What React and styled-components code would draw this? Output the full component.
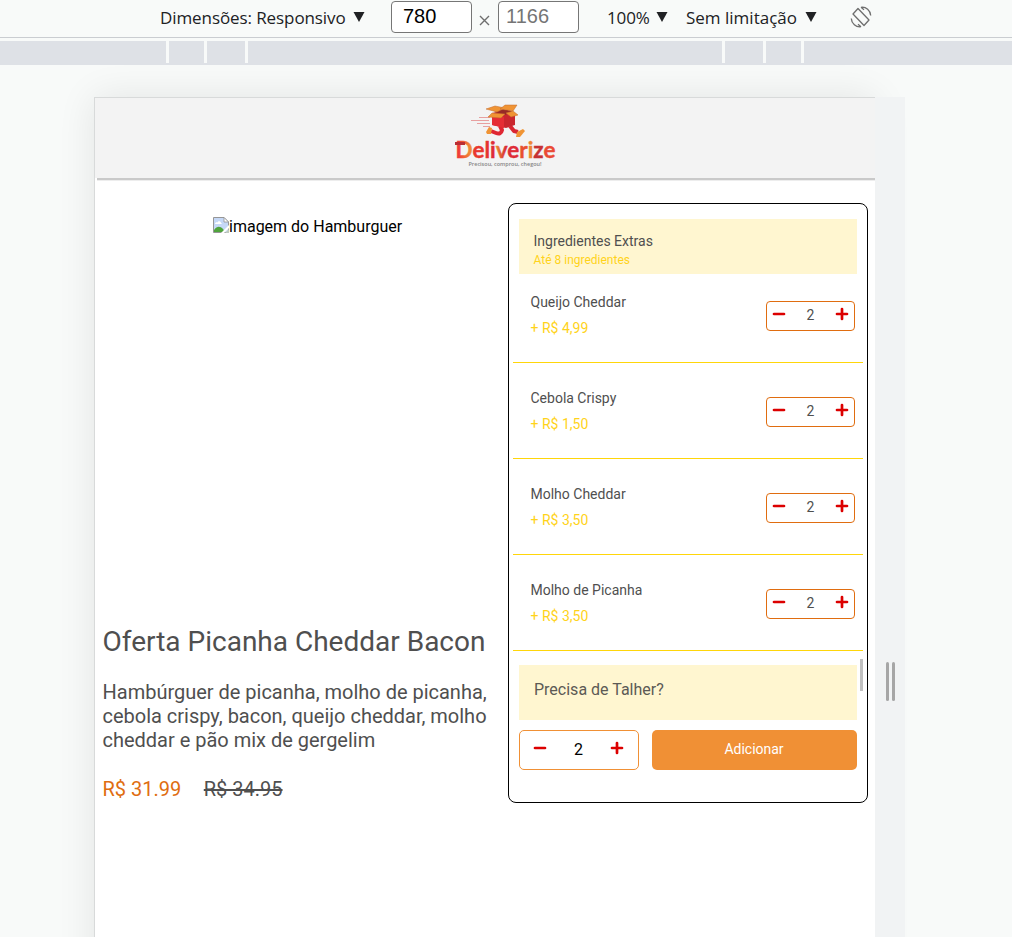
import React from "react";
import styled, { createGlobalStyle } from "styled-components";

const GlobalStyle = createGlobalStyle`
  * { box-sizing: border-box; }
  body { margin: 0; background: #f8faf9; overflow: hidden; }
  h1, p { margin: 0; font-weight: 400; }
  button { font: inherit; border: 0; padding: 0; background: none; }
`;

const Page = styled.div`
  display: flex;
  flex-direction: column;
  width: 1012px;
  height: 937px;
  overflow: hidden;
  font-family: Roboto, sans-serif;
  color: #4f4f4f;
`;

const Toolbar = styled.div`
  display: flex;
  align-items: flex-start;
  flex: none;
  height: 38px;
  padding-left: 160px;
  border-bottom: 1px solid #cacdd1;
  font-family: "Open Sans", "Noto Sans", sans-serif;
  color: #202124;
`;

const ToolbarLabel = styled.div`
  display: flex;
  flex: none;
  width: ${(p) => p.$width}px;
  margin-left: ${(p) => p.$offset || 0}px;
  margin-right: ${(p) => p.$gap}px;
  justify-content: space-between;
  align-items: flex-start;
  font-size: 17px;
  line-height: 24px;
  padding-top: 6px;
  letter-spacing: ${(p) => p.$tracking}px;
  white-space: nowrap;
  svg { margin-top: 6px; }
`;

const SizeField = styled.div`
  flex: none;
  width: 81px;
  height: 32px;
  margin-top: 1px;
  padding-left: ${(p) => p.$inset}px;
  border: 1px solid #767676;
  border-radius: 4px;
  background: #fff;
  font: 20px/28px "Liberation Sans", sans-serif;
  color: ${(p) => (p.$muted ? "#757575" : "#000")};
`;

const Times = styled.svg`
  flex: none;
  margin: 15px 8px 0 7px;
`;

const RotateIcon = styled.svg`
  flex: none;
  margin-top: 6px;
`;

const Ruler = styled.div`
  display: flex;
  flex: none;
  height: 24px;
  margin-top: 3px;
  background: #dee1e6;
`;

const RulerMark = styled.div`
  flex: none;
  width: 3px;
  height: 22px;
  margin-left: ${(p) => p.$gap}px;
  background: #f8faf9;
`;

const Stage = styled.div`
  display: flex;
  flex: 1;
  padding: 32px 0 0 94px;
  min-height: 0;
  overflow: hidden;
`;

const Device = styled.main`
  display: flex;
  flex-direction: column;
  flex: none;
  width: 781px;
  height: 1168px;
  background: #fff;
  border: solid #d8dada;
  border-width: 1px 0 0 1px;
  box-shadow: 0 0 36px rgba(0, 0, 0, 0.09);
`;

const Resizer = styled.div`
  display: flex;
  flex: none;
  gap: 3px;
  width: 30px;
  height: 1168px;
  padding: 565px 0 0 11px;
  background: #f1f3f4;
  position: relative;
`;

const Grip = styled.div`
  width: 3px;
  height: 39px;
  border-radius: 1.5px;
  background: #a6a6a6;
`;

const Header = styled.header`
  display: flex;
  flex: none;
  justify-content: center;
  height: 80px;
  padding: 5px 0 0 40px;
  background: #f3f3f3;
`;

const HeaderLine = styled.div`
  flex: none;
  height: 2px;
  margin-left: 2px;
  background: #c9c9c9;
  box-shadow: 0 1px 0 #ededed;
`;

const Content = styled.div`
  display: flex;
  padding: 23px 7px 0 7.5px;
`;

const Product = styled.section`
  width: 405.5px;
  display: flex;
  flex-direction: column;
`;

const Picture = styled.div`
  display: flex;
  height: 421px;
  padding: 14px 0 0 110.5px;
  font-size: 16px;
  line-height: 20px;
  color: #000;
`;

const Title = styled.h1`
  font-size: 28px;
  line-height: 36px;
  white-space: nowrap;
`;

const Description = styled.p`
  margin-top: 20px;
  font-size: 20px;
  line-height: 24px;
  letter-spacing: -0.01px;
  white-space: nowrap;
`;

const Prices = styled.div`
  display: flex;
  gap: 22.5px;
  margin-top: 25px;
  font-size: 20px;
  line-height: 24px;
`;

const Price = styled.span`
  color: #e06d10;
`;

const OldPrice = styled.s`
  color: #4f4f4f;
`;

const Panel = styled.section`
  position: relative;
  display: flex;
  flex-direction: column;
  flex: none;
  width: 360px;
  height: 600px;
  padding: 15px 4px 0;
  border: 1px solid #000;
  border-radius: 8px;
`;

const Banner = styled.div`
  flex: none;
  height: 55px;
  margin: 0 6px;
  padding: ${(p) => (p.$large ? "15px" : "13px")} 0 0 ${(p) => (p.$large ? 15 : 14.5)}px;
  background: #fff6d0;
  font-size: ${(p) => (p.$large ? 16 : 14)}px;
  line-height: 19px;
  color: ${(p) => (p.$large ? "#5c5a55" : "#4f4f4f")};
`;

const BannerNote = styled.div`
  font-size: 12px;
  line-height: 18px;
  color: #ffd31a;
`;

const Items = styled.div`
  flex: none;
  margin: -7px 0 14px;
`;

const Item = styled.div`
  display: flex;
  justify-content: space-between;
  height: 96px;
  padding: 22px 8px 0 17.5px;
  border-bottom: 1px solid #ffd60a;
  font-size: 14px;
  line-height: 26px;
`;

const ItemPrice = styled.div`
  color: #ffd31a;
`;

const Stepper = styled.div`
  display: flex;
  justify-content: space-between;
  width: ${(p) => (p.$large ? 120 : 89)}px;
  height: ${(p) => (p.$large ? 40 : 30)}px;
  margin-top: ${(p) => (p.$large ? 0 : 12)}px;
  padding: ${(p) => (p.$large ? "9px 14px 0 13px" : "4px 5px 0 5px")};
  border: 1px solid ${(p) => (p.$large ? "#f09035" : "#e06d10")};
  border-radius: ${(p) => (p.$large ? 5 : 4)}px;
  font-size: ${(p) => (p.$large ? 16 : 14)}px;
  line-height: ${(p) => (p.$large ? 20 : 19)}px;
  color: ${(p) => (p.$large ? "#000" : "#4f4f4f")};
`;

const StepButton = styled.button`
  display: flex;
  width: 14px;
  height: 16px;
`;

const Actions = styled.div`
  display: flex;
  justify-content: space-between;
  margin: 10px 6px 0;
`;

const AddButton = styled.button`
  width: 205px;
  height: 40px;
  padding: 0 1px 2px 0;
  border-radius: 5px;
  background: #f09035;
  color: #fff;
  font-size: 14px;
  text-align: center;
`;

const ScrollThumb = styled.div`
  position: absolute;
  right: 4px;
  top: 455px;
  width: 3px;
  height: 32px;
  background: #c1c1c1;
`;

const Caret = () => (
  <svg width="12" height="11" viewBox="0 0 12 11"><path d="M0.5 0H11.5L6 10Z" fill="#202124" /></svg>
);

const Minus = () => (
  <svg width="14" height="16" viewBox="0 0 14 16"><path d="M2 8H12" stroke="#dc0000" strokeWidth="2.7" strokeLinecap="round" /></svg>
);

const Plus = () => (
  <svg width="14" height="16" viewBox="0 0 14 16"><path d="M2 8H12M7 3V13" stroke="#dc0000" strokeWidth="2.7" strokeLinecap="round" /></svg>
);

const BrokenImage = () => (
  <svg width="16" height="16" viewBox="0 0 16 16">
    <path d="M0.5 0.5H11L15.5 5V15.5H0.5Z" fill="#c5d8f7" stroke="#969696" />
    <path d="M2 7C2 5 4 5 4.5 5.5C5 3.5 8 4 8 6C9 6 9 7 8.5 7Z" fill="#fff" />
    <path d="M1 15V13C4 9 7 9 10 12L12 15Z" fill="#4fa43c" />
    <path d="M11 0.5V5H15.5Z" fill="#fff" stroke="#969696" strokeWidth=".8" />
    <path d="M16 8L8 16H11L16 11Z" fill="#fff" />
    <path d="M12 16L16 12V16Z" fill="#bfc9bf" />
  </svg>
);

const logoLetters = [
  ["D", "url(#logoD)"], ["e", "#e9382f"], ["l", "#e6332f"], ["i", "#df2c37"], ["v", "url(#logoV)"],
  ["e", "#df2c37"], ["r", "#e8502f"], ["i", "#ee8532"], ["z", "#c63134"], ["e", "#ea4a35"],
];

const Gradient = ({ id, from, to }) => (
  <linearGradient id={id} gradientUnits="userSpaceOnUse" x1={from[0]} y1="0" x2={to[0]} y2="0">
    <stop offset="0" stopColor={from[1]} />
    <stop offset="1" stopColor={to[1]} />
  </linearGradient>
);

const Logo = () => (
  <svg width="104" height="66" viewBox="0 0 104 66">
    <defs>
      <Gradient id="logoD" from={[3, "#f02b38"]} to={[17, "#f08a35"]} />
      <Gradient id="logoV" from={[41, "#ef9c31"]} to={[53, "#d82d36"]} />
    </defs>
    <g fill="none" stroke="#e7a0a0" strokeWidth="1.1">
      <path d="M26 14.5H37M18 17.5H36M24 20.5H37M30 23.5H37" />
    </g>
    <path d="M47 23L49 27Q48 32 43 30L38 28" fill="none" stroke="#df2632" strokeWidth="4" strokeLinejoin="round" />
    <path d="M57 23L61 28L65 29" fill="none" stroke="#d92632" strokeWidth="4" strokeLinejoin="round" />
    <path d="M36 24L39 25L38 31L34 31L33 29Z" fill="#f09434" />
    <path d="M64 29L70 26L72 28L67 34H63Z" fill="#f09434" />
    <path d="M39 10L50 8L62 10V22L53 25L39 22Z" fill="#c9262e" />
    <path d="M39 11L51 14V25L39 22Z" fill="#e52d35" />
    <path d="M41 9L50 6L60 8L52 12Z" fill="#982a26" />
    <path d="M33 6L42 3L52 5L44 9Z" fill="#f09434" stroke="#c26a2c" strokeWidth=".5" />
    <path d="M47 6L52 2H64L60 8Z" fill="#f09434" stroke="#c26a2c" strokeWidth=".5" />
    <path d="M39 10L52 11L48 15L35 14Z" fill="#f09434" stroke="#c26a2c" strokeWidth=".5" />
    <path d="M53 10L60 8L65 12L58 14Z" fill="#f09434" stroke="#c26a2c" strokeWidth=".5" />
    <text x="2.5" y="55.3" fontFamily="Lato, sans-serif" fontWeight="700" fontSize="23" textLength="100" lengthAdjust="spacingAndGlyphs">
      {logoLetters.map(([letter, fill], i) => (
        <tspan key={i} fill={fill} stroke={fill} strokeWidth=".4">{letter}</tspan>
      ))}
    </text>
    <path d="M2 40.5H12" stroke="#b92e34" strokeWidth="3" />
    <text x="15.5" y="63" fontFamily="Open Sans, sans-serif" fontWeight="600" fontSize="5.5" fill="#858585" textLength="73" lengthAdjust="spacingAndGlyphs">
      Precisou, comprou, chegou!
    </text>
  </svg>
);

const QuantityStepper = ({ large }) => (
  <Stepper $large={large}>
    <StepButton aria-label="Diminuir"><Minus /></StepButton>
    <span>2</span>
    <StepButton aria-label="Aumentar"><Plus /></StepButton>
  </Stepper>
);

const extras = [
  ["Queijo Cheddar", "4,99"],
  ["Cebola Crispy", "1,50"],
  ["Molho Cheddar", "3,50"],
  ["Molho de Picanha", "3,50"],
];

const rulerGaps = [166, 35, 38, 474, 38, 35];

export default function App() {
  return (
    <Page>
      <GlobalStyle />
      <Toolbar>
        <ToolbarLabel $width={205} $gap={26} $tracking={-0.09}>Dimensões: Responsivo<Caret /></ToolbarLabel>
        <SizeField $inset={11}>780</SizeField>
        <Times width="11" height="11" viewBox="0 0 11 11"><path d="M1 1L10 10M10 1L1 10" stroke="#6e6e6e" strokeWidth="1.4" /></Times>
        <SizeField $inset={7} $muted>1166</SizeField>
        <ToolbarLabel $offset={28} $width={61} $gap={18} $tracking={-0.1}>100%<Caret /></ToolbarLabel>
        <ToolbarLabel $width={131} $gap={33} $tracking={0}>Sem limitação<Caret /></ToolbarLabel>
        <RotateIcon width="22" height="22" viewBox="0 0 22 22" fill="none" stroke="#6e6e6e" strokeWidth="1.3">
          <path d="M8 2.5L19 14L14 19.5L3 8Z" strokeLinejoin="round" />
          <path d="M11 1.3C16 .5 20.5 4.5 20.7 9.5M11 1.3L14 3.7M11 20.7C6 21.5 1.5 17.5 1.3 12.5M11 20.7L8 18.3" />
        </RotateIcon>
      </Toolbar>
      <Ruler>{rulerGaps.map((gap, i) => <RulerMark key={i} $gap={gap} />)}</Ruler>
      <Stage>
        <Device>
          <Header><Logo /></Header>
          <HeaderLine />
          <Content>
            <Product>
              <Picture><BrokenImage />imagem do Hamburguer</Picture>
              <Title>Oferta Picanha Cheddar Bacon</Title>
              <Description>
                Hambúrguer de picanha, molho de picanha,<br />
                cebola crispy, bacon, queijo cheddar, molho<br />
                cheddar e pão mix de gergelim
              </Description>
              <Prices><Price>R$ 31.99</Price><OldPrice>R$ 34.95</OldPrice></Prices>
            </Product>
            <Panel>
              <Banner>Ingredientes Extras<BannerNote>Até 8 ingredientes</BannerNote></Banner>
              <Items>
                {extras.map(([name, price]) => (
                  <Item key={name}>
                    <div>{name}<ItemPrice>+ R$ {price}</ItemPrice></div>
                    <QuantityStepper />
                  </Item>
                ))}
              </Items>
              <Banner $large>Precisa de Talher?</Banner>
              <Actions>
                <QuantityStepper large />
                <AddButton>Adicionar</AddButton>
              </Actions>
              <ScrollThumb />
            </Panel>
          </Content>
        </Device>
        <Resizer><Grip /><Grip /></Resizer>
      </Stage>
    </Page>
  );
}
